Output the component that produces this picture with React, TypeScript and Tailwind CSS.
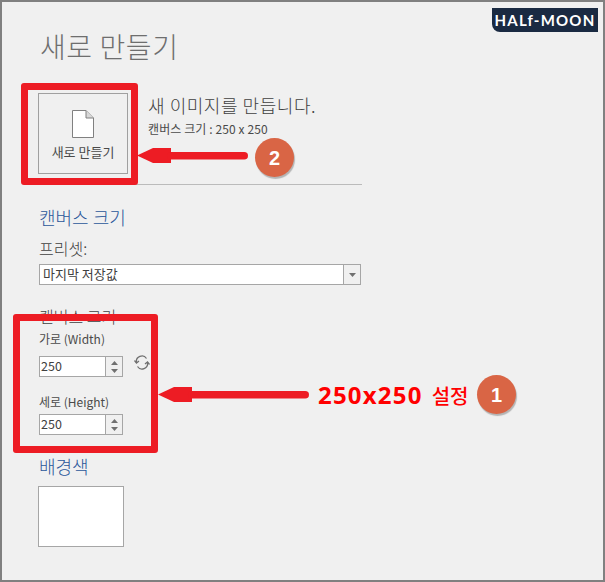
const kr = "font-['Noto_Sans_CJK_KR','Noto_Sans',sans-serif]";

function SpinBox({ value }: { value: string }) {
  return (
    <div className="flex h-[21px] w-[84px] border border-[#a6a6a6] bg-white">
      <div className="flex-1 pl-[1px] text-[12.5px] leading-[18px] text-[#404040]">{value}</div>
      <div className="flex w-[17px] flex-col items-center justify-center gap-[4px] border-l border-[#a6a6a6] bg-[#f0f0f0]">
        <svg width="7" height="4" viewBox="0 0 7 4">
          <path d="M3.5 0 L7 4 H0 Z" fill="#707070" />
        </svg>
        <svg width="7" height="4" viewBox="0 0 7 4">
          <path d="M0 0 H7 L3.5 4 Z" fill="#707070" />
        </svg>
      </div>
    </div>
  );
}

function Arrow({ className, width }: { className: string; width: number }) {
  return (
    <svg className={className} width={width} height="17" viewBox={`0 0 ${width} 17`}>
      <path d="M0 8.5 L16 1 H34 V16 H16 Z" fill="#ed1c24" />
      <rect x="30" y="5" width={width - 30} height="7.5" rx="3.75" fill="#ed1c24" />
    </svg>
  );
}

function Badge({ n, className }: { n: string; className: string }) {
  return (
    <div
      className={`absolute flex h-[39px] w-[39px] items-center justify-center rounded-full bg-[#d96545] text-[20px] font-bold text-white shadow-[1px_2px_1px_rgba(0,0,0,0.25)] font-['Liberation_Sans',sans-serif] ${className}`}
    >
      {n}
    </div>
  );
}

export default function App() {
  return (
    <div className={`relative flex h-[582px] w-[605px] flex-col overflow-hidden border-2 border-[#808080] bg-[#f0f0f0] pl-[36px] ${kr}`}>
      <h1 className="mt-[24px] h-[40px] pl-[2px] text-[28px] leading-[40px] font-light tracking-[0.6px] text-[#6e6e6e]">
        새로 만들기
      </h1>

      <div className="mt-[27px] flex w-[324px] items-start gap-[20px]">
        <div className="flex h-[81px] w-[90px] flex-col items-center border border-[#a0a0a0] pt-[16px]">
          <svg width="22" height="28" viewBox="0 0 22 28">
            <path d="M0.5 0.5 H14 L21.5 8 V27.5 H0.5 Z" fill="#fff" stroke="#808080" />
            <path d="M14 0.5 V8 H21.5" fill="#d8d8d8" stroke="#808080" />
          </svg>
          <span className="mt-[5px] text-[13px] leading-[18px] text-[#4a4a4a]">새로 만들기</span>
        </div>
        <div>
          <div className="h-[24px] text-[18px] leading-[24px] font-light tracking-[0.55px] whitespace-nowrap text-[#404040]">
            새 이미지를 만듭니다.
          </div>
          <div className="mt-[3px] text-[12px] leading-[18px] tracking-[0.1px] text-[#4a4a4a]">캔버스 크기 : 250 x 250</div>
        </div>
      </div>

      <div className="mt-[10px] h-px w-[324px] bg-[#bbbbbb]" />

      <h2 className="mt-[19px] h-[26px] pl-[1px] text-[18px] leading-[26px] font-light text-[#2b579a]">캔버스 크기</h2>
      <div className="mt-[8px] h-[20px] pl-[1px] text-[16px] leading-[20px] font-light text-[#404040]">프리셋:</div>

      <div className="mt-[6px] ml-[1px] flex h-[21px] w-[322px] border border-[#a6a6a6] bg-white">
        <div className="flex-1 pl-[3px] text-[13px] leading-[18px] text-[#404040]">마지막 저장값</div>
        <div className="flex w-[17px] items-center justify-center border-l border-[#a6a6a6] bg-[#f0f0f0]">
          <svg width="7" height="4" viewBox="0 0 7 4">
            <path d="M0 0 H7 L3.5 4 Z" fill="#707070" />
          </svg>
        </div>
      </div>

      <div className="mt-[21px] h-[20px] pl-[1px] text-[16px] leading-[20px] font-light text-[#404040]">캔버스 크기</div>
      <div className="mt-[4px] h-[18px] pl-[1px] text-[12px] leading-[18px] text-[#4a4a4a]">가로 (Width)</div>
      <div className="mt-[8px] ml-[1px] flex h-[21px] items-center gap-[11px]">
        <SpinBox value="250" />
        <svg className="-mt-[9px]" width="16" height="15" viewBox="0 0 16 15" fill="none" stroke="#707070" strokeWidth="1.3">
          <path d="M2.5 7.5 A5.5 5.5 0 0 1 12.5 3.5" />
          <path d="M13.5 7.5 A5.5 5.5 0 0 1 3.5 11.5" />
          <path d="M0.5 5.5 L2.5 8 L5 6" />
          <path d="M11 9 L13.5 7 L15.5 9.5" />
        </svg>
      </div>
      <div className="mt-[16px] h-[18px] pl-[1px] text-[12px] leading-[18px] text-[#4a4a4a]">세로 (Height)</div>
      <div className="mt-[3px] ml-[1px]">
        <SpinBox value="250" />
      </div>

      <h2 className="mt-[18px] h-[26px] pl-[1px] text-[18px] leading-[26px] font-light text-[#2b579a]">배경색</h2>
      <div className="mt-[7px] h-[61px] w-[86px] border border-[#a6a6a6] bg-white" />

      {/* logo */}
      <div className="absolute top-[6px] left-[490px] flex h-[24px] w-[106px] items-center justify-center rounded-bl-[8px] bg-[#1a2a42] text-[15px] font-bold tracking-[1.2px] text-white font-['Lato',sans-serif]">
        HALf-MOON
      </div>

      {/* annotations */}
      <div className="absolute top-[81px] left-[19px] h-[102px] w-[117px] rounded-[3px] border-[7px] border-[#ed1c24]" />
      <Arrow className="absolute top-[145px] left-[135px]" width={111} />
      <Badge n="2" className="top-[136px] left-[253px]" />

      <div className="absolute top-[312px] left-[11px] h-[139px] w-[145px] rounded-[3px] border-[7px] border-[#ed1c24]" />
      <Arrow className="absolute top-[384px] left-[156px]" width={151} />
      <div className="absolute top-[377px] left-[316px] flex items-baseline gap-[9px] text-[#ff0000]">
        <span className="text-[24px] leading-[32px] font-bold tracking-[1.2px] font-['Open_Sans',sans-serif]">250x250</span>
        <span className="text-[20px] leading-[32px] font-medium">설정</span>
      </div>
      <Badge n="1" className="top-[373px] left-[475px]" />
    </div>
  );
}
